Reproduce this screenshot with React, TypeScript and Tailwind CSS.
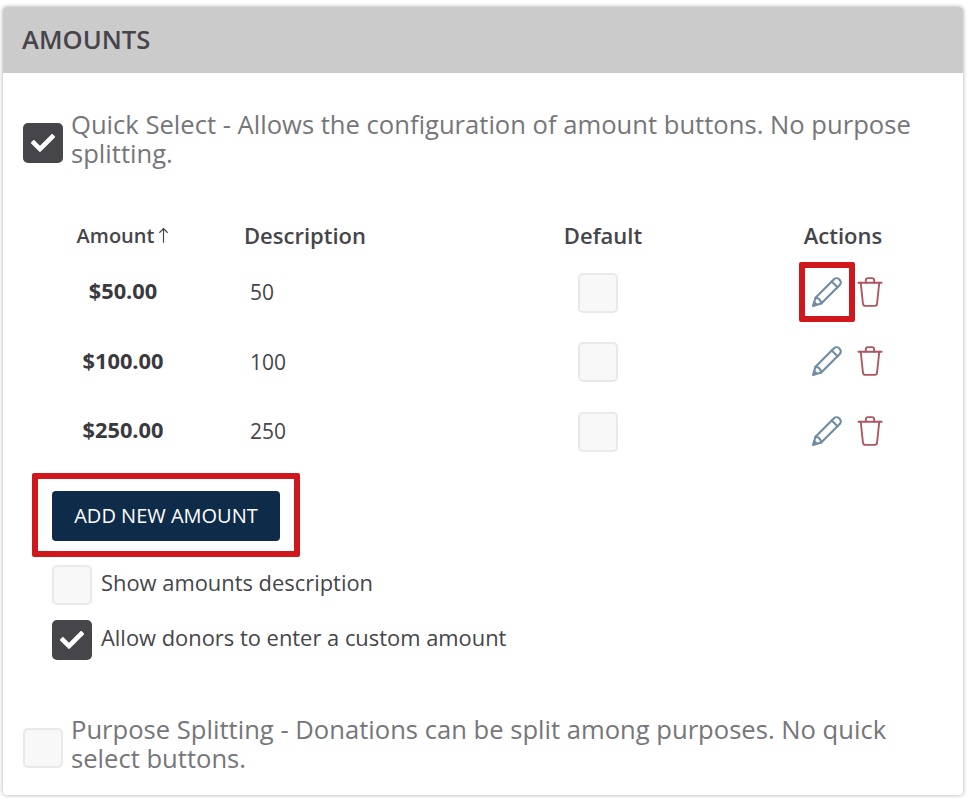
import { FaCheck } from 'react-icons/fa'

const rows = [
  { amount: '$50.00', description: '50', marked: true },
  { amount: '$100.00', description: '100', marked: false },
  { amount: '$250.00', description: '250', marked: false },
]

function Box({ checked }: { checked?: boolean }) {
  if (checked) {
    return (
      <span className="w-10 h-10 shrink-0 rounded-[5px] bg-[#45454a] flex items-center justify-center">
        <FaCheck className="w-6 h-6 text-white" />
      </span>
    )
  }
  return <span className="w-10 h-10 shrink-0 block rounded-[5px] bg-[#f8f8f8] border-2 border-[#e9e9e9]" />
}

function Pencil() {
  return (
    <svg viewBox="0 0 32 32" className="w-[34px] h-[34px] -my-px" fill="none" stroke="#6f8ca3" strokeWidth="2" strokeLinejoin="round" strokeLinecap="round">
      <path d="M3 29l2.2-7.6L22.6 4a3.4 3.4 0 0 1 4.8 0l.6.6a3.4 3.4 0 0 1 0 4.8L10.600 26.800z" />
      <path d="M5.200 21.400c2.600.2 4.800 2.400 5.400 5.400" />
      <path d="M20.500 6.100l5.400 5.400" />
      <path d="M3 29l3.400-1-2.400-2.400z" fill="#6f8ca3" />
    </svg>
  )
}

function Trash() {
  return (
    <svg viewBox="0 0 28 34" className="w-[26px] h-8" fill="none" stroke="#ad5560" strokeWidth="2" strokeLinejoin="round" strokeLinecap="round">
      <path d="M1.500 7h25" />
      <path d="M4 7l2.400 22.500a2.500 2.500 0 0 0 2.500 2.500h10.200a2.500 2.500 0 0 0 2.500-2.500L24 7" />
      <path d="M9.500 7V4.500A2.500 2.500 0 0 1 12 2h4a2.500 2.500 0 0 1 2.500 2.500V7" />
    </svg>
  )
}

export default function App() {
  return (
    <div className="w-[967px] h-[798px] bg-white pt-[7px] px-[3px] font-['Open_Sans',sans-serif] overflow-hidden">
      <div className="w-[960px] h-[788px] rounded-[4px] bg-white shadow-[0_0_4px_rgba(0,0,0,0.35)] overflow-hidden">
        <div className="h-[66px] bg-[#cbcbcb] pl-[19px] flex items-center">
          <h2 className="text-[25.600px] font-semibold text-[#45454a]">AMOUNTS</h2>
        </div>

        <div className="pl-5 pt-[37px] flex items-center gap-[8px]">
          <span className="pt-[8px] shrink-0"><Box checked /></span>
          <p className="w-[860px] text-[25.600px] leading-[29px] text-[#76767a]">
            Quick Select - Allows the configuration of amount buttons. No purpose splitting.
          </p>
        </div>

        {/* amount | description | default | spacer | actions */}
        <div className="mt-[48px] ml-[49px] grid grid-cols-[142px_326px_166px_74px_166px] text-[#45454a]">
          <div className="h-[41px] pb-[2px] flex items-center justify-center gap-1 text-[20px] font-semibold">
            Amount
            <svg viewBox="0 0 12 18" className="w-[11px] h-[17px]" fill="none" stroke="#45454a" strokeWidth="1.300">
              <path d="M6 17V1.500M1.500 6L6 1.500 10.500 6" />
            </svg>
          </div>
          <div className="h-[41px] pb-[2px] pl-[50px] flex items-center text-[22px] font-semibold">Description</div>
          <div className="h-[41px] pb-[2px] flex items-center justify-center text-[22px] font-semibold">Default</div>
          <div className="col-start-5 h-[41px] pb-[2px] flex items-center justify-center text-[22px] font-semibold">Actions</div>

          {rows.map((row) => (
            <div key={row.amount} className="contents">
              <div className="h-[69.500px] flex items-center justify-center text-[21.800px] font-bold text-[#3a3a3e]">{row.amount}</div>
              <div className="h-[69.500px] flex items-center pl-[56px] pt-[2px] text-[21px]">{row.description}</div>
              <div className="h-[69.500px] flex items-center justify-center pr-[10px] pt-[2px]"><Box /></div>
              <div className="col-start-5 h-[69.500px] flex items-center justify-center gap-[13px] pl-[6px]">
                <span className="relative flex">
                  <Pencil />
                  {row.marked && (
                    <span className="absolute -left-[11px] -top-[14px] w-[56px] h-[60px] border-[6px] border-[#d0181c] rounded-[2px]" />
                  )}
                </span>
                <Trash />
              </div>
            </div>
          ))}
        </div>

        <div className="mt-[25px] ml-[49px]">
          <div className="relative w-fit">
            <button className="w-[228px] h-[50px] rounded-[4px] bg-[#0e2c4a] text-white text-[20px]">ADD NEW AMOUNT</button>
            <span className="absolute -left-5 -top-[18px] w-[268px] h-[84px] border-[6px] border-[#d0181c] rounded-[2px]" />
          </div>
          <div className="mt-[24px] flex items-center gap-[9px] text-[21.900px] text-[#45454a]">
            <Box />
            <span className="pb-[2px]">Show amounts description</span>
          </div>
          <div className="mt-[15px] flex items-center gap-[9px] text-[21.900px] text-[#45454a]">
            <Box checked />
            <span className="pb-[2px]">Allow donors to enter a custom amount</span>
          </div>
        </div>

        <div className="pl-5 mt-[55px] flex items-center gap-[8px]">
          <span className="pt-[8px] shrink-0"><Box /></span>
          <p className="w-[860px] text-[25.600px] leading-[29px] text-[#76767a]">
            Purpose Splitting - Donations can be split among purposes. No quick select buttons.
          </p>
        </div>
      </div>
    </div>
  )
}
